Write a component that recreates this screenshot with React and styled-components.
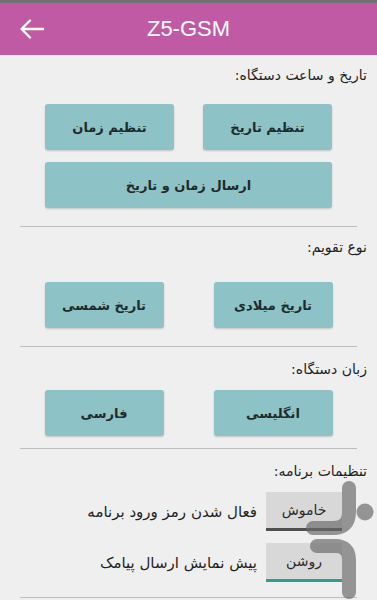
import React from "react";
import styled, { createGlobalStyle } from "styled-components";

const Global = createGlobalStyle`
  html, body { margin: 0; padding: 0; background: #efefef; }
  body { font-family: "DejaVu Sans", "Noto Sans", sans-serif; }
`;

const Page = styled.div`
  position: relative;
  width: 377px;
  height: 600px;
  overflow: hidden;
  background: #efefef;
`;

const Header = styled.header`
  height: 52px;
  border-top: 3px solid #707070;
  background: #c05aa4;
  display: flex;
  align-items: center;
  position: relative;
  justify-content: center;
`;

const BackButton = styled.button`
  position: absolute;
  left: 18px;
  top: 12px;
  width: 28px;
  height: 28px;
  padding: 0;
  border: none;
  background: transparent;
  display: flex;
  align-items: center;
  justify-content: center;
`;

const Title = styled.h1`
  margin: 0;
  font-family: "Liberation Sans", Arial, sans-serif;
  font-weight: 400;
  font-size: 22px;
  color: #ffffff;
`;

const Content = styled.main`
  direction: rtl;
`;

const Section = styled.section`
  padding: ${(p) => p.$pt}px 0 ${(p) => p.$pb}px;
  border-bottom: 1px solid #bdbdbd;
  margin: 0 20px;
`;

const Label = styled.div`
  font-size: 14px;
  line-height: 20px;
  color: #1e1e1e;
  margin-right: -10px;
`;

const ButtonRow = styled.div`
  display: flex;
  justify-content: center;
  gap: ${(p) => p.$gap}px;
  margin-top: ${(p) => p.$mt}px;
`;

const ActionButton = styled.button`
  width: ${(p) => p.$w}px;
  height: 46px;
  border: none;
  border-radius: 3px;
  background: #8dc2c6;
  box-shadow: 0 1px 2px rgba(0, 0, 0, 0.18);
  font-family: "DejaVu Sans", sans-serif;
  font-weight: 700;
  font-size: 13px;
  color: #1f2a2a;
  direction: rtl;
  padding: 0;
`;

const ToggleRow = styled.div`
  display: flex;
  align-items: center;
  gap: 9px;
  margin-top: ${(p) => p.$mt}px;
  margin-right: 15px;
`;

const Toggle = styled.button`
  width: 76px;
  height: 39px;
  padding: 0;
  border: none;
  border-bottom: 3px solid ${(p) => (p.$on ? "#2e9e8e" : "#4f4f4f")};
  background: #d8d8d8;
  font-family: "DejaVu Sans", sans-serif;
  font-size: 14px;
  color: #2a2a2a;
  box-sizing: border-box;
`;

const ToggleLabel = styled.span`
  font-size: 15px;
  color: #1e1e1e;
`;

const Watermark = styled.svg`
  position: absolute;
  left: 0;
  top: 0;
  pointer-events: none;
`;

export default function App() {
  return (
    <Page>
      <Global />
      <Header>
        <BackButton aria-label="back">
          <svg width="28" height="28" viewBox="0 0 28 28">
            <path
              d="M25 14 H4 M12 5.5 L3.5 14 L12 22.5"
              stroke="#fff"
              strokeWidth="2.4"
              fill="none"
              strokeLinecap="round"
              strokeLinejoin="round"
            />
          </svg>
        </BackButton>
        <Title>Z5-GSM</Title>
      </Header>
      <Content>
        <Section $pt={10} $pb={18}>
          <Label>تاریخ و ساعت دستگاه:</Label>
          <ButtonRow $gap={29} $mt={19}>
            <ActionButton $w={129}>تنظیم تاریخ</ActionButton>
            <ActionButton $w={129}>تنظیم زمان</ActionButton>
          </ButtonRow>
          <ButtonRow $gap={0} $mt={12}>
            <ActionButton $w={287}>ارسال زمان و تاریخ</ActionButton>
          </ButtonRow>
        </Section>
        <Section $pt={10} $pb={18}>
          <Label>نوع تقویم:</Label>
          <ButtonRow $gap={50} $mt={25}>
            <ActionButton $w={119}>تاریخ میلادی</ActionButton>
            <ActionButton $w={119}>تاریخ شمسی</ActionButton>
          </ButtonRow>
        </Section>
        <Section $pt={12} $pb={12}>
          <Label>زبان دستگاه:</Label>
          <ButtonRow $gap={50} $mt={11}>
            <ActionButton $w={119}>انگلیسی</ActionButton>
            <ActionButton $w={119}>فارسی</ActionButton>
          </ButtonRow>
        </Section>
        <Section $pt={12} $pb={15}>
          <Label>تنظیمات برنامه:</Label>
          <ToggleRow $mt={11}>
            <Toggle>خاموش</Toggle>
            <ToggleLabel>فعال شدن رمز ورود برنامه</ToggleLabel>
          </ToggleRow>
          <ToggleRow $mt={12}>
            <Toggle $on>روشن</Toggle>
            <ToggleLabel>پیش نمایش ارسال پیامک</ToggleLabel>
          </ToggleRow>
        </Section>
      </Content>
      <Watermark width="377" height="600" viewBox="0 0 377 600">
        <g
          fill="none"
          stroke="rgba(105,105,105,0.68)"
          strokeWidth="14"
          strokeLinecap="round"
          strokeLinejoin="round"
        >
          <path d="M349 488 V512 Q349 528 333 528 H313" />
          <path d="M317 546 H335 Q349 546 349 560 V592" />
        </g>
        <circle cx="365" cy="512" r="8.5" fill="rgba(105,105,105,0.68)" />
      </Watermark>
    </Page>
  );
}
